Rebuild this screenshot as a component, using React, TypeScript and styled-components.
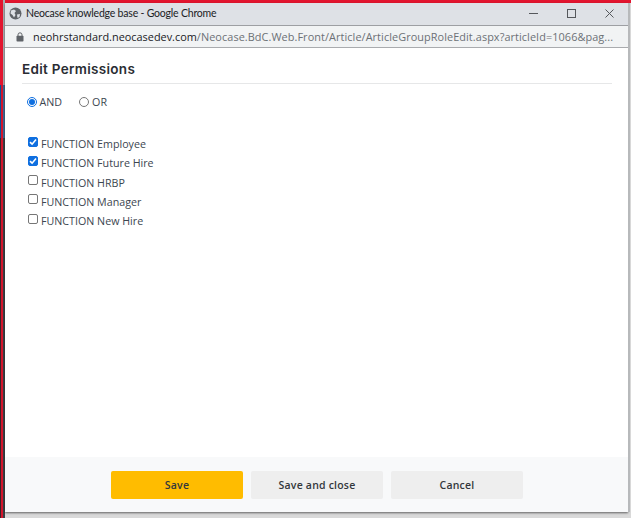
import React from "react";
import styled, { createGlobalStyle } from "styled-components";

const Global = createGlobalStyle`
  html, body { margin: 0; padding: 0; background: #d9d9d9; }
  #root { width: 631px; height: 518px; overflow: hidden; }
  * { box-sizing: border-box; }
`;

const Desktop = styled.div`
  width: 631px;
  height: 518px;
  display: flex;
  background: #d9d9d9;
`;

const LeftEdge = styled.div`
  width: 5px;
  height: 518px;
  flex: none;
  display: flex;
  flex-direction: column;
`;

const EdgeBand = styled.div<{ $outer: string; $red: string; $inner: string; $h?: number }>`
  background: linear-gradient(
    90deg,
    ${(p) => p.$outer} 0 1px,
    ${(p) => p.$red} 1px 3.5px,
    ${(p) => p.$inner} 3.5px 5px
  );
  flex: ${(p) => (p.$h ? "none" : "1 1 auto")};
  height: ${(p) => (p.$h ? `${p.$h}px` : "auto")};
`;

const Column = styled.div`
  flex: 1;
  display: flex;
  flex-direction: column;
  min-width: 0;
`;

const TopStripe = styled.div`
  height: 3px;
  flex: none;
  background: #e2152f;
`;

const Win = styled.div`
  width: 623px;
  height: 509px;
  flex: none;
  display: flex;
  flex-direction: column;
  background: #fff;
  box-shadow: 2px 0 0 #b7b9bb, 0 1px 2px rgba(0, 0, 0, 0.55);
`;

const TitleBar = styled.div`
  height: 23px;
  flex: none;
  display: flex;
  align-items: center;
  padding: 0 0 2px 4px;
  background: #dee1e6;
  border-bottom: 1px solid #9d9fa3;
`;

const TitleText = styled.div`
  margin-left: 4px;
  flex: 1;
  font: 400 10.5px "Lato", sans-serif;
  letter-spacing: -0.2px;
  color: #202124;
  white-space: nowrap;
`;

const WinControls = styled.div`
  display: flex;
  align-items: center;
  gap: 29px;
  padding-right: 14px;
  color: #55585c;
`;

const AddressBar = styled.div`
  height: 22px;
  flex: none;
  display: flex;
  align-items: center;
  padding: 0 12px 0 11px;
  background: #f1f3f4;
  border-bottom: 1px solid #a9abae;
`;

const Url = styled.div`
  margin-left: 9px;
  flex: 1;
  overflow: hidden;
  white-space: nowrap;
  font: 400 10.9px "Open Sans", sans-serif;
  letter-spacing: 0.07px;
  color: #6c7176;
`;

const Host = styled.span`
  color: #202124;
  letter-spacing: 0;
`;

const Content = styled.div`
  flex: 1;
  display: flex;
  flex-direction: column;
  padding: 0 16px 0 17px;
`;

const Heading = styled.h1`
  margin: 0;
  height: 36px;
  padding-top: 13px;
  font: 600 13.5px/16px "Inter", sans-serif;
  letter-spacing: 0.3px;
  color: #2a2d33;
  border-bottom: 1px solid #e6e7e8;
`;

const RadioRow = styled.div`
  display: flex;
  align-items: center;
  margin-top: 10px;
  height: 16px;
  padding-left: 4.5px;
`;

const RadioItem = styled.label`
  display: flex;
  align-items: center;
  gap: 3px;
  margin-right: 17px;
  font: 400 10.7px "Open Sans", sans-serif;
  color: #3c4650;
`;

const Radio = styled.span<{ $on?: boolean }>`
  width: 10px;
  height: 10px;
  border-radius: 50%;
  flex: none;
  background: #fff;
  border: 1px solid ${(p) => (p.$on ? "#0f6fe0" : "#767676")};
  display: flex;
  align-items: center;
  justify-content: center;
  &::after {
    content: "";
    display: ${(p) => (p.$on ? "block" : "none")};
    width: 6px;
    height: 6px;
    border-radius: 50%;
    background: #0f6fe0;
  }
`;

const CheckList = styled.div`
  margin-top: 24.4px;
  display: flex;
  flex-direction: column;
  padding-left: 6px;
`;

const CheckRow = styled.label`
  height: 19.25px;
  display: flex;
  align-items: center;
  gap: 3px;
  font: 400 10.7px "Open Sans", sans-serif;
  color: #3c4650;
`;

const Box = styled.span<{ $on?: boolean }>`
  width: 10px;
  height: 10px;
  margin-top: -5px;
  flex: none;
  border-radius: 2px;
  border: 1px solid ${(p) => (p.$on ? "#0f6fe0" : "#767676")};
  background: ${(p) => (p.$on ? "#0f6fe0" : "#fff")};
  display: flex;
  align-items: center;
  justify-content: center;
`;

const Footer = styled.div`
  height: 55px;
  flex: none;
  display: flex;
  align-items: center;
  justify-content: flex-end;
  gap: 8px;
  padding: 0 105px 0 0;
  background: #f8f9fa;
`;

const Button = styled.button<{ $primary?: boolean }>`
  width: 132px;
  height: 28px;
  border: 0;
  border-radius: 2px;
  background: ${(p) => (p.$primary ? "#ffbc00" : "#eeeeee")};
  font: 600 10.5px "Open Sans", sans-serif;
  color: #33373c;
  letter-spacing: 0.2px;
`;

const Globe = () => (
  <svg width="13" height="13" viewBox="0 0 13 13">
    <circle cx="6.5" cy="6.5" r="6" fill="#5f6368" />
    <path d="M2 3.5 L5 2.5 L7 4 L5.5 6 L6.5 8 L5 10.5 L3.5 8 L1.5 6.5 Z" fill="#dee1e6" />
    <path d="M8 7.5 L11 7 L10.5 10 L8.5 11 Z" fill="#dee1e6" />
  </svg>
);

const Lock = () => (
  <svg width="8" height="10" viewBox="0 0 8 10">
    <path d="M2 4 V2.8 a2 2 0 0 1 4 0 V4" fill="none" stroke="#5f6368" strokeWidth="1" />
    <rect x="0.5" y="3.8" width="7" height="5.7" rx="0.8" fill="#5f6368" />
  </svg>
);

const Check = () => (
  <svg width="8" height="8" viewBox="0 0 8 8">
    <path d="M1 4.2 L3.1 6.2 L7 1.6" fill="none" stroke="#fff" strokeWidth="1.6" />
  </svg>
);

const Minimize = () => (
  <svg width="9" height="9" viewBox="0 0 9 9">
    <path d="M0 4.5 H9" stroke="currentColor" strokeWidth="1" />
  </svg>
);
const Maximize = () => (
  <svg width="9" height="9" viewBox="0 0 9 9">
    <rect x="0.5" y="0.5" width="8" height="8" fill="none" stroke="currentColor" strokeWidth="1" />
  </svg>
);
const CloseX = () => (
  <svg width="9" height="9" viewBox="0 0 9 9">
    <path d="M0.5 0.5 L8.5 8.5 M8.5 0.5 L0.5 8.5" stroke="currentColor" strokeWidth="1" />
  </svg>
);

const roles = [
  { name: "FUNCTION Employee", on: true },
  { name: "FUNCTION Future Hire", on: true },
  { name: "FUNCTION HRBP", on: false },
  { name: "FUNCTION Manager", on: false },
  { name: "FUNCTION New Hire", on: false },
];

export default function App() {
  return (
    <>
      <Global />
      <Desktop>
        <LeftEdge>
          <EdgeBand $outer="#e2152f" $red="#e2152f" $inner="#a9abae" $h={85} />
          <EdgeBand $outer="#0b4f93" $red="#d3152c" $inner="#3f6a94" $h={53} />
          <EdgeBand $outer="#3a2226" $red="#d3152c" $inner="#3c4044" />
        </LeftEdge>
        <Column>
          <TopStripe />
          <Win>
            <TitleBar>
              <Globe />
              <TitleText>Neocase knowledge base - Google Chrome</TitleText>
              <WinControls>
                <Minimize />
                <Maximize />
                <CloseX />
              </WinControls>
            </TitleBar>
            <AddressBar>
              <Lock />
              <Url>
                <Host>neohrstandard.neocasedev.com</Host>
                /Neocase.BdC.Web.Front/Article/ArticleGroupRoleEdit.aspx?articleId=1066&amp;pag...
              </Url>
            </AddressBar>
            <Content>
              <Heading>Edit Permissions</Heading>
              <RadioRow>
                <RadioItem>
                  <Radio $on />
                  AND
                </RadioItem>
                <RadioItem>
                  <Radio />
                  OR
                </RadioItem>
              </RadioRow>
              <CheckList>
                {roles.map((r) => (
                  <CheckRow key={r.name}>
                    <Box $on={r.on}>{r.on && <Check />}</Box>
                    {r.name}
                  </CheckRow>
                ))}
              </CheckList>
            </Content>
            <Footer>
              <Button $primary>Save</Button>
              <Button>Save and close</Button>
              <Button>Cancel</Button>
            </Footer>
          </Win>
        </Column>
      </Desktop>
    </>
  );
}
